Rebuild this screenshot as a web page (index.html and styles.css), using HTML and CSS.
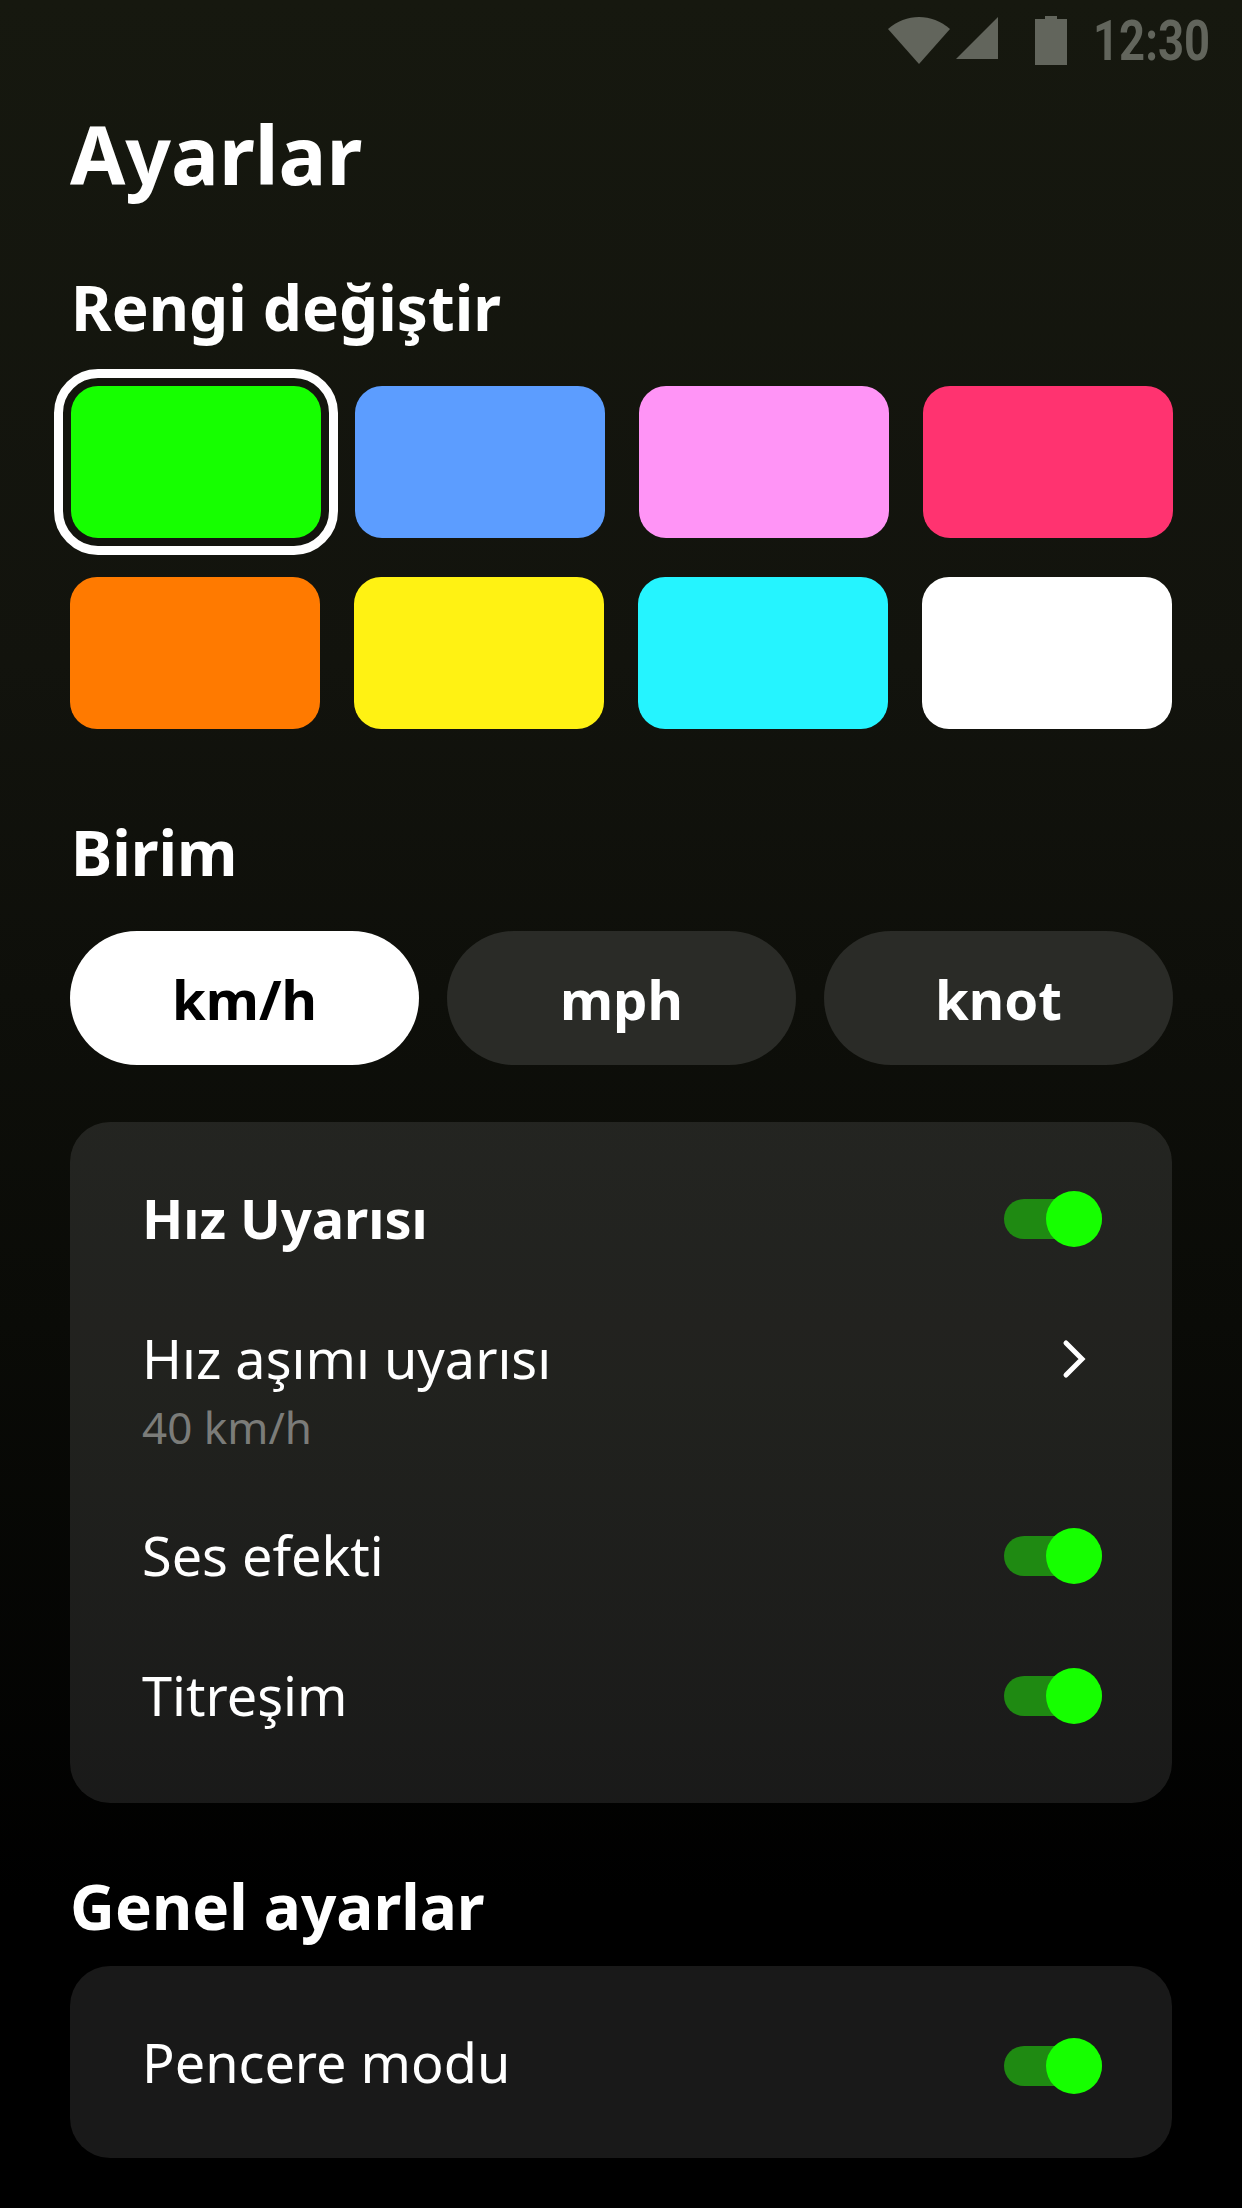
FILE: index.html
```html
<!DOCTYPE html>
<html lang="tr">
<head>
    <meta charset="UTF-8">
    <meta name="viewport" content="width=device-width, initial-scale=1.0">
    <title>Ayarlar</title>
    <link rel="stylesheet" href="styles.css">
</head>
<body>

<div class="status-bar">
    <svg class="wifi-icon" width="62" height="47" viewBox="0 0 62 47"><path d="M0 12 C18 -4 44 -4 62 12 L31 47 Z"/></svg>
    <svg class="signal-icon" width="42" height="42" viewBox="0 0 42 42"><path d="M42 0 V42 H0 Z"/></svg>
    <svg class="battery-icon" width="32" height="49" viewBox="0 0 32 49"><path d="M10 3 V0 H22 V3 H32 V49 H0 V3 Z"/></svg>
    <span class="clock">12:30</span>
</div>

<div class="page">
    <h1 class="page-title">Ayarlar</h1>

    <h2 class="section-title title-color">Rengi değiştir</h2>
    <div class="swatch-row first-row">
        <div class="swatch selected green"></div>
        <div class="swatch blue"></div>
        <div class="swatch pink"></div>
        <div class="swatch red"></div>
    </div>
    <div class="swatch-row second-row">
        <div class="swatch orange"></div>
        <div class="swatch yellow"></div>
        <div class="swatch cyan"></div>
        <div class="swatch white"></div>
    </div>

    <h2 class="section-title title-unit">Birim</h2>
    <div class="units">
        <div class="unit active">km/h</div>
        <div class="unit">mph</div>
        <div class="unit">knot</div>
    </div>

    <div class="card alert-card">
        <div class="row row-head">
            <span class="row-strong">Hız Uyarısı</span>
            <div class="toggle"><div class="knob"></div></div>
        </div>
        <div class="row row-limit">
            <div>
                <div class="row-label">Hız aşımı uyarısı</div>
                <div class="row-sub">40 km/h</div>
            </div>
            <svg class="chevron" width="24" height="40" viewBox="0 0 24 40"><path d="M4 4 L20 20 L4 36"/></svg>
        </div>
        <div class="row">
            <span class="row-label">Ses efekti</span>
            <div class="toggle"><div class="knob"></div></div>
        </div>
        <div class="row">
            <span class="row-label">Titreşim</span>
            <div class="toggle"><div class="knob"></div></div>
        </div>
    </div>

    <h2 class="section-title title-general">Genel ayarlar</h2>
    <div class="card window-card">
        <div class="row">
            <span class="row-label">Pencere modu</span>
            <div class="toggle toggle-low"><div class="knob"></div></div>
        </div>
    </div>
</div>

</body>
</html>
```

FILE: styles.css
```css
* {
    box-sizing: border-box;
}
html, body {
    margin: 0;
    height: 2208px;
}
body {
    font-family: "Noto Sans", "Open Sans", sans-serif;
    color: #fff;
    background: linear-gradient(180deg, #16180f 0%, #12130d 30%, #0a0b07 60%, #000 86%);
    overflow: hidden;
}
.status-bar {
    height: 80px;
    display: flex;
    align-items: flex-start;
    justify-content: flex-end;
    padding: 16px 32px 0 0;
    color: #62655c;
}
.status-bar svg {
    fill: #62655c;
    display: block;
}
.wifi-icon {
    margin-top: 1px;
    margin-right: 6px;
}
.signal-icon {
    margin-top: 1px;
    margin-right: 37px;
}
.battery-icon {
    margin-right: 29px;
}
.clock {
    font-family: Roboto, sans-serif;
    font-weight: 700;
    font-size: 55px;
    line-height: 54px;
    margin-top: -2px;
    width: 114px;
    white-space: nowrap;
    display: flex;
    justify-content: flex-end;
    transform: scaleX(0.825);
    transform-origin: right center;
}
.page {
    padding: 0 70px;
}
.page-title {
    margin: 46px 0 0;
    font-size: 80px;
    line-height: 56px;
    font-weight: 700;
}
.section-title {
    margin: 0;
    font-size: 62px;
    line-height: 82px;
    font-weight: 700;
}
.title-color {
    margin-top: 84px;
    padding-left: 1px;
}
.swatch-row {
    display: flex;
    gap: 34px;
}
.first-row {
    margin: 38px -1px 0 1px;
}
.second-row {
    margin-top: 39px;
}
.swatch {
    flex: none;
    width: 250px;
    height: 152px;
    border-radius: 27px;
}
.selected {
    outline: 9px solid #fff;
    outline-offset: 8px;
}
.green { background: #16ff00; }
.blue { background: #5c9dff; }
.pink { background: #ff94f6; }
.red { background: #ff3370; }
.orange { background: #ff7a00; }
.yellow { background: #fff213; }
.cyan { background: #25f4ff; }
.white { background: #fff; }
.title-unit {
    margin-top: 82px;
    padding-left: 1px;
}
.units {
    display: grid;
    grid-template-columns: repeat(3, 349px);
    column-gap: 28px;
    margin-top: 38px;
}
.unit {
    height: 134px;
    padding-top: 2px;
    border-radius: 67px;
    background: #2a2b27;
    display: flex;
    align-items: center;
    justify-content: center;
    font-size: 54.5px;
    font-weight: 700;
}
.unit.active {
    background: #fff;
    color: #000;
}
.card {
    border-radius: 40px;
    background: rgba(255, 255, 255, 0.097);
    padding: 0 70px 0 72px;
}
.alert-card {
    margin-top: 57px;
    height: 681px;
    padding-top: 69px;
}
.alert-card .row > span {
    padding-bottom: 2px;
}
.title-general {
    margin-top: 62px;
}
.window-card {
    height: 192px;
    margin-top: 19px;
    display: flex;
    flex-direction: column;
    justify-content: center;
}
.row {
    display: flex;
    align-items: center;
    justify-content: space-between;
    height: 140px;
}
.row-head {
    height: 56px;
}
.row-limit {
    margin-top: 76px;
    margin-bottom: 23px;
    align-items: flex-start;
}
.row-strong {
    font-size: 54px;
    font-weight: 700;
}
.row-label {
    font-size: 54px;
    line-height: 70px;
}
.row-sub {
    font-size: 44px;
    line-height: 68px;
    color: #7b7c79;
}
.toggle {
    position: relative;
    width: 98px;
    height: 40px;
    border-radius: 20px;
    background: #1f8a12;
}
.toggle-low {
    margin-top: 8px;
}
.knob {
    position: absolute;
    right: 0;
    top: -8px;
    width: 56px;
    height: 56px;
    border-radius: 50%;
    background: #16ff00;
}
.chevron {
    margin-top: 16px;
    margin-right: 16px;
    fill: none;
    stroke: #fff;
    stroke-width: 5;
    stroke-linecap: round;
}
```
